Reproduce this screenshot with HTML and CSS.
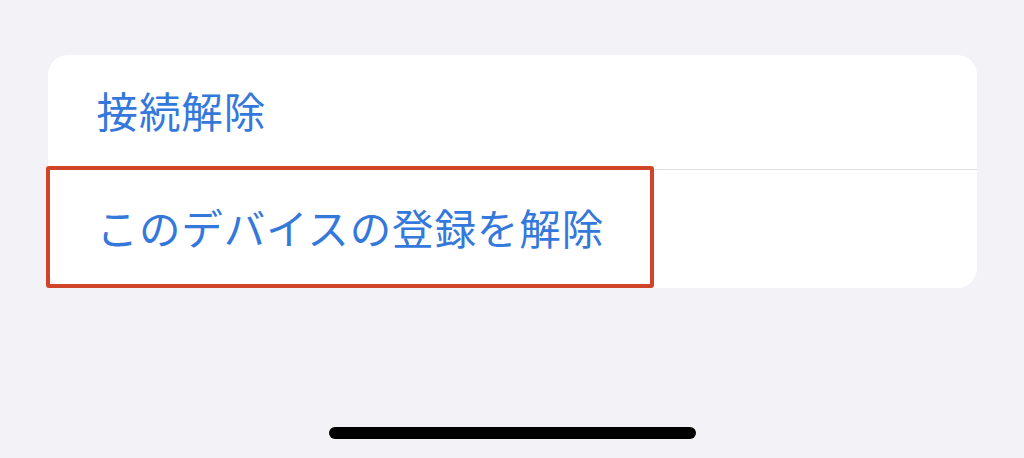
FILE: index.html
```html
<!DOCTYPE html>
<html lang="ja">
<head>
<meta charset="utf-8">
<link rel="stylesheet" href="styles.css">
</head>
<body>
<div class="screen">
  <div class="card">
    <div class="row row-first"><span class="label">接続解除</span></div>
    <div class="row row-second">
      <span class="label">このデバイスの登録を解除</span>
      <div class="highlight"></div>
    </div>
  </div>
  <div class="home-bar"></div>
</div>
</body>
</html>
```

FILE: styles.css
```css
html, body {
  margin: 0;
  padding: 0;
  background: #f2f2f7;
}
.screen {
  width: 1024px;
  height: 458px;
  padding-top: 55px;
  box-sizing: border-box;
  display: flex;
  flex-direction: column;
  align-items: center;
  font-family: "Noto Sans CJK JP", "Noto Sans", sans-serif;
}
.card {
  width: 929px;
  background: #ffffff;
  border-radius: 20px;
  display: flex;
  flex-direction: column;
}
.row {
  position: relative;
  display: flex;
  align-items: center;
  padding-left: 49px;
}
.row-first {
  height: 115px;
}
.row-first::after {
  content: "";
  position: absolute;
  left: 49px;
  right: 0;
  bottom: 0;
  height: 1px;
  background: #e0e0e4;
}
.row-second {
  height: 118px;
}
.label {
  font-size: 41.5px;
  line-height: 1;
  color: #3578dc;
  letter-spacing: 0.9px;
  margin-top: -3px;
}
.highlight {
  position: absolute;
  left: -2px;
  top: -4px;
  width: 608px;
  height: 122px;
  border: 4px solid #d0442a;
  border-radius: 3px;
  box-sizing: border-box;
}
.home-bar {
  width: 367px;
  height: 12px;
  border-radius: 6px;
  background: #000;
  margin-top: 139px;
}
```
